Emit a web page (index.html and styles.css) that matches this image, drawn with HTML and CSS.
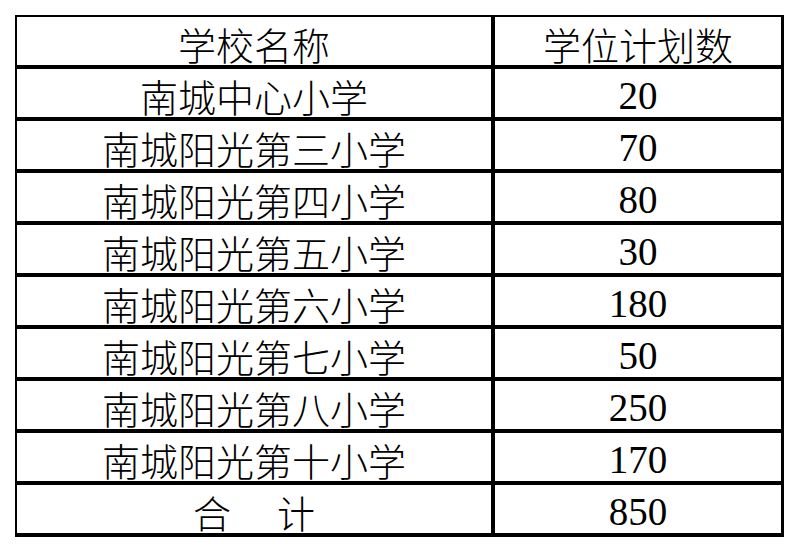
FILE: index.html
```html
<!DOCTYPE html>
<html lang="zh-CN">
<head>
<meta charset="utf-8">
<title>学位计划数</title>
<link rel="stylesheet" href="styles.css">
</head>
<body>
<div class="sheet">
  <div class="cell">学校名称</div>
  <div class="cell">学位计划数</div>
  <div class="cell">南城中心小学</div>
  <div class="cell num">20</div>
  <div class="cell">南城阳光第三小学</div>
  <div class="cell num">70</div>
  <div class="cell">南城阳光第四小学</div>
  <div class="cell num">80</div>
  <div class="cell">南城阳光第五小学</div>
  <div class="cell num">30</div>
  <div class="cell">南城阳光第六小学</div>
  <div class="cell num">180</div>
  <div class="cell">南城阳光第七小学</div>
  <div class="cell num">50</div>
  <div class="cell">南城阳光第八小学</div>
  <div class="cell num">250</div>
  <div class="cell">南城阳光第十小学</div>
  <div class="cell num">170</div>
  <div class="cell total">合　计</div>
  <div class="cell num">850</div>
</div>
</body>
</html>
```
FILE: styles.css
```css
html, body {
  margin: 0;
  padding: 0;
  background: #fff;
}
body {
  width: 800px;
  height: 552px;
  overflow: hidden;
}
.sheet {
  display: grid;
  grid-template-columns: 474px 286px;
  grid-auto-rows: 48px;
  gap: 4px;
  background: #000;
  padding: 2px 3px 4px 2px;
  margin: 15px 0 0 15px;
  width: max-content;
}
.cell {
  background: #fff;
  display: flex;
  align-items: center;
  justify-content: center;
  padding-top: 6px;
  box-sizing: border-box;
  font-family: "Noto Sans CJK SC", sans-serif;
  font-weight: 300;
  font-size: 38px;
  line-height: 1;
  color: #000;
}
.num {
  font-family: "Liberation Serif", "Noto Sans CJK SC", serif;
  font-weight: 400;
  font-size: 39px;
  padding-top: 4px;
}
.total {
  letter-spacing: 4px;
  padding-left: 4px;
}
```
